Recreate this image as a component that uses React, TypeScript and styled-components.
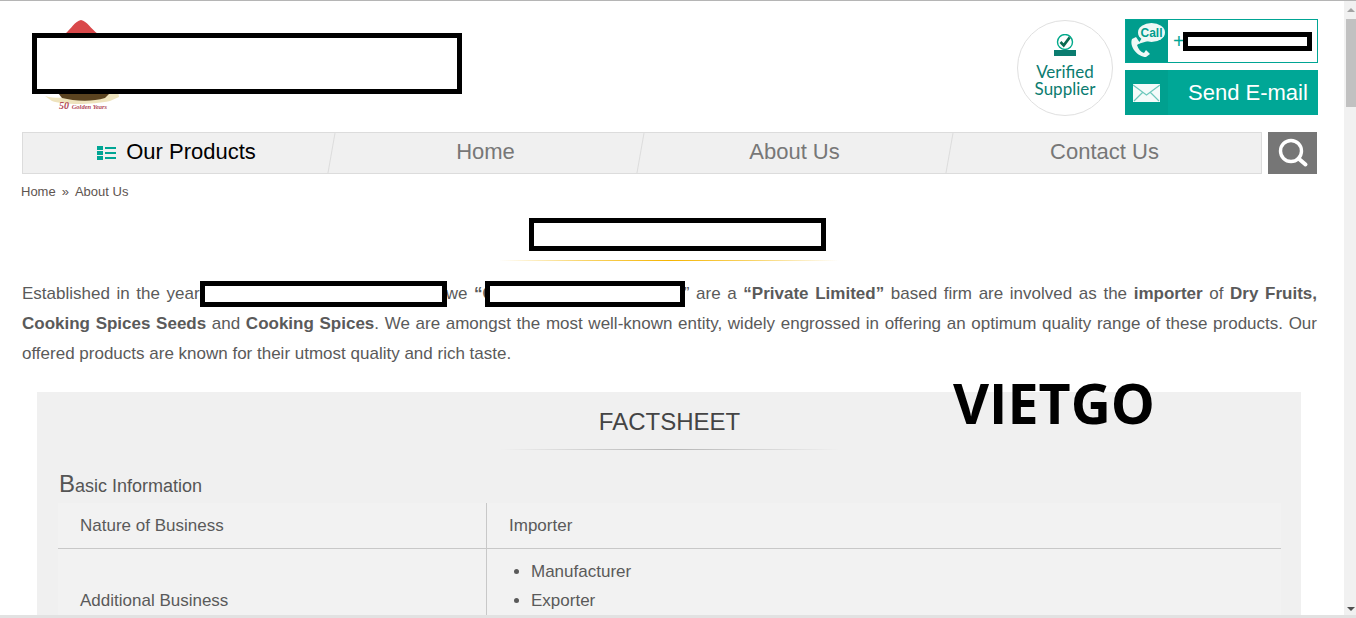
import React from "react";
import styled, { createGlobalStyle } from "styled-components";

const GlobalStyle = createGlobalStyle`
  html, body {
    margin: 0;
    padding: 0;
    height: 618px;
    overflow: hidden;
    background: #fff;
    font-family: "Liberation Sans", Arial, sans-serif;
  }
`;

const Frame = styled.div`
  width: 1356px;
  height: 618px;
  display: flex;
  flex-direction: column;
  border-top: 1px solid #b5b5b5;
  box-sizing: border-box;
  overflow: hidden;
`;

const Viewport = styled.div`
  flex: 1;
  min-height: 0;
  display: flex;
`;

const BottomEdge = styled.div`
  height: 3px;
  background: #e2e2e2;
  flex: none;
`;

const Page = styled.div`
  position: relative;
  flex: 1;
  min-width: 0;
  padding: 0 27px 0 22px;
  overflow: hidden;
`;

const Scrollbar = styled.div`
  width: 12px;
  flex: none;
  background: #f1f1f1;
  display: flex;
  flex-direction: column;
  align-items: flex-end;
  justify-content: space-between;
  position: relative;
`;

const ScrollThumb = styled.div`
  position: absolute;
  top: 18px;
  right: 0;
  width: 10px;
  height: 88px;
  background: #c1c1c1;
`;

const ScrollArrow = styled.div<{ $down?: boolean }>`
  width: 0;
  height: 0;
  margin: ${(p) => (p.$down ? "0 1px 4px 0" : "7px 1px 0 0")};
  border-left: 4px solid transparent;
  border-right: 4px solid transparent;
  ${(p) =>
    p.$down
      ? "border-top: 4px solid #505050;"
      : "border-bottom: 4px solid #a3a3a3;"}
`;

const Header = styled.header`
  height: 131px;
  display: flex;
  justify-content: space-between;
  align-items: flex-start;
`;

const LogoBlock = styled.div`
  position: relative;
  width: 440px;
  height: 110px;
  margin-top: 18px;
`;

const LogoArt = styled.svg`
  position: absolute;
  left: 0;
  top: 0;
  width: 110px;
  height: 90px;
`;

const LogoCaption = styled.div`
  position: absolute;
  left: 37px;
  top: 80px;
  font: italic 700 6.5px/14px "Liberation Serif", serif;
  color: #b24a56;
  white-space: nowrap;
  span {
    font-size: 10px;
    margin-right: 1px;
  }
`;

const LogoRedaction = styled.div`
  position: absolute;
  left: 10px;
  top: 14px;
  width: 430px;
  height: 61px;
  box-sizing: border-box;
  border: 5px solid #000;
  background: #fff;
`;

const HeaderRight = styled.div`
  display: flex;
  gap: 12px;
  margin-top: 18px;
  margin-right: -1px;
`;

const Badge = styled.div`
  width: 96px;
  height: 96px;
  margin-top: 1px;
  box-sizing: border-box;
  border: 1px solid #e0e0e0;
  border-radius: 50%;
  display: flex;
  flex-direction: column;
  align-items: center;
  padding-top: 13px;
  font: 17px/17px Lato, sans-serif;
  color: #0b7c70;
  text-align: center;
`;

const BadgeIcon = styled.svg`
  width: 22px;
  height: 22px;
  margin-bottom: 7px;
  flex: none;
`;

const Contacts = styled.div`
  width: 193px;
  display: flex;
  flex-direction: column;
  gap: 7px;
`;

const CallBox = styled.div`
  height: 44px;
  box-sizing: border-box;
  border: 1px solid #00a594;
  display: flex;
  align-items: center;
`;

const IconCell = styled.div`
  width: 42px;
  align-self: stretch;
  flex: none;
  background: #009d8d;
  display: flex;
  align-items: center;
  justify-content: center;
`;

const Plus = styled.span`
  color: #00a594;
  font-size: 20px;
  margin-left: 5px;
`;

const PhoneRedaction = styled.span`
  width: 129px;
  height: 19px;
  margin-left: -2px;
  box-sizing: border-box;
  border: 5px solid #000;
  background: #fff;
  position: relative;
`;

const EmailBox = styled.div`
  height: 45px;
  background: #00a796;
  display: flex;
  align-items: center;
  color: #fff;
  font-size: 22px;
`;

const EmailIconCell = styled(IconCell)`
  width: 43px;
  background: #00a08f;
`;

const EmailLabel = styled.span`
  margin-left: 20px;
`;

const NavRow = styled.div`
  display: flex;
  justify-content: space-between;
  height: 42px;
`;

const NavBar = styled.nav`
  width: 1240px;
  box-sizing: border-box;
  border: 1px solid #dcdcdc;
  background: #f0f0f0;
  display: grid;
  grid-template-columns: 309px 309px 309px 311px;
  overflow: hidden;
`;

const NavItem = styled.a<{ $active?: boolean }>`
  position: relative;
  display: flex;
  align-items: center;
  justify-content: center;
  gap: 10px;
  font-size: 22px;
  color: ${(p) => (p.$active ? "#000" : "#777")};
  padding: 0 2px 3px 0;
  &:not(:last-child)::after {
    content: "";
    position: absolute;
    right: 0;
    top: 0;
    bottom: 0;
    width: 1px;
    background: #dcdcdc;
    transform: skewX(-10deg);
  }
`;

const ListIcon = styled.svg`
  width: 19px;
  height: 14px;
  margin-top: 3px;
`;

const SearchButton = styled.button`
  width: 49px;
  height: 42px;
  padding: 0;
  border: 0;
  background: #767676;
  display: flex;
  align-items: center;
  justify-content: center;
`;

const Breadcrumb = styled.div`
  margin: 9px 0 0 -1px;
  font-size: 13px;
  line-height: 17px;
  color: #5e5450;
  display: flex;
  gap: 6px;
`;

const TitleRedaction = styled.div`
  width: 297px;
  height: 33px;
  margin: 18px 0 0 507px;
  box-sizing: border-box;
  border: 5px solid #000;
  background: #fff;
`;

const GoldRule = styled.div`
  width: 340px;
  height: 1px;
  margin: 9px 0 0 477px;
  background: linear-gradient(90deg, #fff, #f8d468 25%, #f5b400 50%, #f8d468 75%, #fff);
`;

const Intro = styled.p`
  margin: 18px 0 0;
  font-size: 17px;
  line-height: 30px;
  color: #5a5a5a;
  text-align: justify;
`;

const InlineRedaction = styled.span<{ $w: number; $pull?: number }>`
  display: inline-block;
  width: ${(p) => p.$w}px;
  height: 26px;
  box-sizing: border-box;
  border: 5px solid #000;
  background: #fff;
  vertical-align: middle;
  margin: -2px -1px 0 ${(p) => p.$pull ?? 0}px;
  position: relative;
`;

const Factsheet = styled.section`
  margin: 23px 16px 0 15px;
  height: 240px;
  background: #f0f0f0;
  padding: 0 20px 0 21px;
  overflow: hidden;
`;

const FactTitle = styled.h2`
  margin: 0;
  padding-top: 16px;
  font-size: 24px;
  line-height: 28px;
  font-weight: 400;
  color: #444;
  text-align: center;
`;

const GreyRule = styled.div`
  width: 340px;
  height: 1px;
  margin: 13px auto 0;
  background: linear-gradient(90deg, transparent, #b5b5b5 50%, transparent);
`;

const SubHeading = styled.h3`
  margin: 20px 0 0 1px;
  font-size: 18px;
  line-height: 27px;
  font-weight: 400;
  color: #555;
  &::first-letter {
    font-size: 24px;
  }
`;

const FactTable = styled.div`
  margin-top: 3px;
  background: #f2f2f2;
  font-size: 17px;
  color: #5a5a5a;
`;

const FactRow = styled.div`
  display: grid;
  grid-template-columns: 429px 1fr;
  &:not(:last-child) {
    border-bottom: 1px solid #c8c8c8;
  }
`;

const FactLabel = styled.div<{ $tall?: boolean }>`
  border-right: 1px solid #c8c8c8;
  padding: ${(p) => (p.$tall ? "41px 22px 0" : "12px 22px 12px")};
  line-height: 21px;
`;

const FactValue = styled.div`
  padding: 12px 22px 12px;
  line-height: 21px;
`;

const FactList = styled.ul`
  margin: 8px 0 0;
  padding: 0 0 0 44px;
  line-height: 29px;
`;

const Watermark = styled.div`
  position: absolute;
  left: 953px;
  top: 368px;
  font: 700 55.5px/68px "Open Sans", sans-serif;
  color: #000;
`;

export default function App() {
  return (
    <>
      <GlobalStyle />
      <Frame>
        <Viewport>
          <Page>
            <Header>
              <LogoBlock>
                <LogoArt viewBox="0 0 110 90">
                  <path d="M43 15 C49 10 53 2 59 1 C65 2 69 10 76 15 Z" fill="#d9484a" />
                  <path d="M23 77 C34 80 40 78 48 79 C60 81 76 80 84 76 L96 72 L97 78 L88 82 C70 86 40 86 30 82 Z" fill="#eee3bd" />
                  <path d="M36 74 H88 L83 79 C70 83 52 82 40 79 Z" fill="#5a4320" />
                </LogoArt>
                <LogoCaption>
                  <span>50</span> Golden Years
                </LogoCaption>
                <LogoRedaction />
              </LogoBlock>
              <HeaderRight>
                <Badge>
                  <BadgeIcon viewBox="0 0 22 22">
                    <circle cx="11" cy="8" r="7.5" fill="#fff" stroke="#00a98a" strokeWidth="1.4" />
                    <path d="M6.500 8l3.200 3.400 6-8" fill="none" stroke="#0a6a50" strokeWidth="2.600" />
                    <rect x="0" y="16" width="22" height="6" fill="#0b7c70" />
                  </BadgeIcon>
                  Verified
                  <br />
                  Supplier
                </Badge>
                <Contacts>
                  <CallBox>
                    <IconCell>
                      <svg width="42" height="42" viewBox="0 0 42 42">
                        <path d="M6 19L10 17L14 23L11 25C12 29 15 32 18 33L20 30L24 34L20 37C12 37 3 27 6 19Z" fill="#eef8f6" />
                        <ellipse cx="25.5" cy="12.5" rx="13.5" ry="9.5" fill="#eef8f6" />
                        <path d="M16 18l-4 6 10-3z" fill="#eef8f6" />
                        <text x="25.5" y="16.5" textAnchor="middle" fontSize="12" fontWeight="700" fill="#009d8d" fontFamily="Liberation Sans">Call</text>
                      </svg>
                    </IconCell>
                    <Plus>+</Plus>
                    <PhoneRedaction />
                  </CallBox>
                  <EmailBox>
                    <EmailIconCell>
                      <svg width="27" height="18" viewBox="0 0 27 18">
                        <rect width="27" height="18" fill="#f4fbfa" />
                        <path d="M0 1l13.500 10L27 1M1 17l9-9M26 17l-9-9" fill="none" stroke="#6cc8bc" strokeWidth="1.200" />
                      </svg>
                    </EmailIconCell>
                    <EmailLabel>Send E-mail</EmailLabel>
                  </EmailBox>
                </Contacts>
              </HeaderRight>
            </Header>

            <NavRow>
              <NavBar>
                <NavItem $active>
                  <ListIcon viewBox="0 0 19 14">
                    <path d="M0 0h6v4H0zM0 5h6v4H0zM0 10h6v4H0z" fill="#00a594" />
                    <path d="M8 1h11v2H8zM8 6h11v2H8zM8 11h11v2H8z" fill="#00a594" />
                  </ListIcon>
                  Our Products
                </NavItem>
                <NavItem>Home</NavItem>
                <NavItem>About Us</NavItem>
                <NavItem>Contact Us</NavItem>
              </NavBar>
              <SearchButton aria-label="Search">
                <svg width="32" height="32" viewBox="0 0 32 32">
                  <circle cx="14" cy="14" r="10.5" fill="none" stroke="#fff" strokeWidth="3.400" />
                  <path d="M21.500 21.500l7 6" stroke="#fff" strokeWidth="4" strokeLinecap="round" />
                </svg>
              </SearchButton>
            </NavRow>

            <Breadcrumb>
              <span>Home</span>
              <span>»</span>
              <span>About Us</span>
            </Breadcrumb>

            <TitleRedaction />
            <GoldRule />

            <Intro>
              Established in the year<InlineRedaction $w={247} />we <b>“G</b>
              <InlineRedaction $w={200} $pull={-11} />” are a <b>“Private Limited”</b> based firm are involved as the{" "}
              <b>importer</b> of <b>Dry Fruits, Cooking Spices Seeds</b> and <b>Cooking Spices</b>. We are amongst the most
              well-known entity, widely engrossed in offering an optimum quality range of these products. Our offered
              products are known for their utmost quality and rich taste.
            </Intro>

            <Factsheet>
              <FactTitle>FACTSHEET</FactTitle>
              <GreyRule />
              <SubHeading>Basic Information</SubHeading>
              <FactTable>
                <FactRow>
                  <FactLabel>Nature of Business</FactLabel>
                  <FactValue>Importer</FactValue>
                </FactRow>
                <FactRow>
                  <FactLabel $tall>Additional Business</FactLabel>
                  <FactList>
                    <li>Manufacturer</li>
                    <li>Exporter</li>
                  </FactList>
                </FactRow>
              </FactTable>
            </Factsheet>

            <Watermark>VIETGO</Watermark>
          </Page>
          <Scrollbar>
            <ScrollArrow />
            <ScrollThumb />
            <ScrollArrow $down />
          </Scrollbar>
        </Viewport>
        <BottomEdge />
      </Frame>
    </>
  );
}
